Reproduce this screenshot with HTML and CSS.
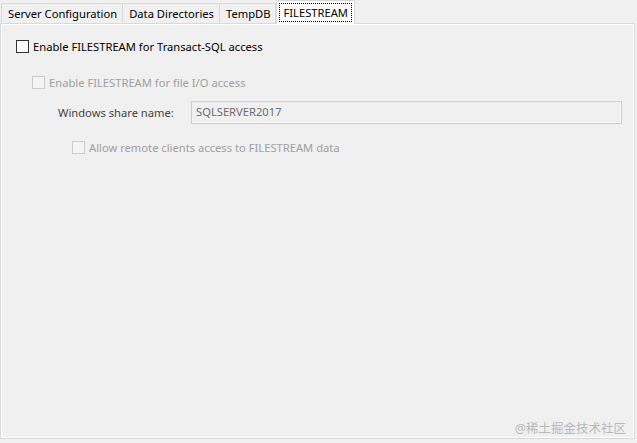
FILE: index.html
```html
<!DOCTYPE html>
<html lang="en">
<head>
    <meta charset="UTF-8">
    <title>FILESTREAM</title>
    <link rel="stylesheet" href="styles.css">
</head>
<body>
    <div class="tabs">
        <div class="tab">Server Configuration</div>
        <div class="tab">Data Directories</div>
        <div class="tab">TempDB</div>
        <div class="tab active"><span class="focus">FILESTREAM</span></div>
    </div>

    <div class="panel">
        <label class="check check-main">
            <span class="box"></span>
            <span>Enable FILESTREAM for Transact-SQL access</span>
        </label>

        <label class="check check-io disabled">
            <span class="box"></span>
            <span>Enable FILESTREAM for file I/O access</span>
        </label>

        <div class="share-row">
            <span class="share-label">Windows share name:</span>
            <div class="share-input">SQLSERVER2017</div>
        </div>

        <label class="check check-remote disabled">
            <span class="box"></span>
            <span>Allow remote clients access to FILESTREAM data</span>
        </label>

        <div class="watermark">@稀土掘金技术社区</div>
    </div>
</body>
</html>
```

FILE: styles.css
```css
/* reset */
* {
    margin: 0;
    padding: 0;
    box-sizing: border-box;
}

body {
    width: 637px;
    height: 443px;
    background: #f0f0f0;
    font-family: "Noto Sans", "Noto Sans CJK SC", sans-serif;
    font-size: 11.2px;
    color: #000;
    overflow: hidden;
}

/* tab strip */
.tabs {
    display: flex;
    align-items: flex-end;
    height: 23px;
    padding-left: 1px;
    position: relative;
    z-index: 1;
}

.tab {
    height: 20px;
    padding: 0 5px 0 6px;
    line-height: 19px;
    background: #f0f0f0;
    border: 1px solid #d9d9d9;
    border-bottom: none;
    margin-right: -1px;
}

.tab.active {
    background: #fff;
    border-color: #d9d9d9;
    padding: 2px 2px 0;
    margin-left: 1px;
    margin-bottom: -1px;
    height: 24px;
}

.tab .focus {
    display: block;
    border: 1px dotted #000;
    padding: 0 3px;
    line-height: 17px;
}

/* main page */
.panel {
    height: 416px;
    width: 635px;
    border: 1px solid #d9d9d9;
    box-shadow: inset 1px 1px 0 #fff, inset -1px -1px 0 #fff;
    position: relative;
}

.check {
    display: flex;
    align-items: center;
    gap: 4px;
    height: 16px;
}

.box {
    width: 13px;
    height: 13px;
    border: 1px solid #333;
    background: #fff;
}

.check-main {
    margin: 14px 0 0 15px;
}

.check-io {
    margin: 20px 0 0 31px;
}

.check-remote {
    margin: 15px 0 0 71px;
}

.disabled {
    color: #a0a0a0;
}

.disabled .box {
    border-color: #cccccc;
    background: #f4f4f4;
}

.share-row {
    display: flex;
    align-items: center;
    margin: 11px 0 0 57px;
}

.share-label {
    width: 133px;
    color: #444;
}

.share-input {
    width: 431px;
    height: 23px;
    line-height: 20px;
    padding-left: 4px;
    border: 1px solid #cccccc;
    box-shadow: inset -1px -1px 0 #fafafa;
    color: #6d6d6d;
}

/* watermark overlay */
.watermark {
    position: absolute;
    right: 8px;
    bottom: 1px;
    font-size: 12.5px;
    color: #b8b8b8;
}
```
